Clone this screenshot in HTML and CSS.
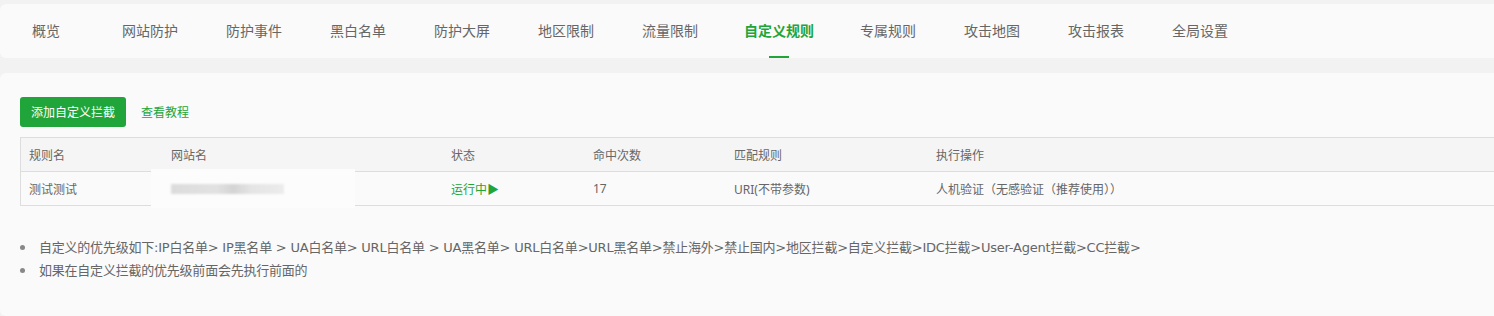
FILE: index.html
```html
<!DOCTYPE html>
<html>

<head>
    <meta charset="utf-8" />
    <meta name="viewport" content="width=device-width, initial-scale=1.0">
    <title>自定义规则</title>
    <link rel="stylesheet" href="styles.css">
</head>

<body>
    <div class="tab-card">
        <ul class="tab-nav">
            <li class="first">概览</li>
            <li>网站防护</li>
            <li>防护事件</li>
            <li>黑白名单</li>
            <li>防护大屏</li>
            <li>地区限制</li>
            <li>流量限制</li>
            <li class="on">自定义规则</li>
            <li>专属规则</li>
            <li>攻击地图</li>
            <li>攻击报表</li>
            <li>全局设置</li>
        </ul>
    </div>

    <div class="main-card">
        <div class="toolbar">
            <button class="btn-success">添加自定义拦截</button>
            <a class="link" href="#">查看教程</a>
        </div>

        <table class="rule-table">
            <thead>
                <tr>
                    <th class="c-name">规则名</th>
                    <th class="c-site">网站名</th>
                    <th class="c-status">状态</th>
                    <th class="c-hit">命中次数</th>
                    <th class="c-match">匹配规则</th>
                    <th>执行操作</th>
                </tr>
            </thead>
            <tbody>
                <tr>
                    <td>测试测试</td>
                    <td class="masked">
                        <span class="mask-box"><span class="blur-text"></span></span>
                    </td>
                    <td class="running">运行中▶</td>
                    <td>17</td>
                    <td>URI(不带参数)</td>
                    <td>人机验证（无感验证（推荐使用））</td>
                </tr>
            </tbody>
        </table>

        <ul class="help-list">
            <li>自定义的优先级如下:IP白名单&gt; IP黑名单 &gt; UA白名单&gt; URL白名单 &gt; UA黑名单&gt; URL白名单&gt;URL黑名单&gt;禁止海外&gt;禁止国内&gt;地区拦截&gt;自定义拦截&gt;IDC拦截&gt;User-Agent拦截&gt;CC拦截&gt;</li>
            <li>如果在自定义拦截的优先级前面会先执行前面的</li>
        </ul>
    </div>
</body>

</html>
```

FILE: styles.css
```css
/* Nền trang */
body {
    margin: 0;
    background-color: #f2f2f2;
    font-family: "Noto Sans", "Noto Sans CJK SC", sans-serif;
    color: #666;
    overflow: hidden;
    padding-top: 4px;
}

/* Thanh tab trên cùng */
.tab-card {
    background-color: #fafafa;
    border-radius: 6px;
    margin-right: -10px;
    height: 54px;
}

.tab-nav {
    list-style: none;
    margin: 0;
    padding: 0 0 0 32px;
    display: flex;
    gap: 48px;
    height: 54px;
}

.tab-nav li {
    position: relative;
    font-size: 14px;
    line-height: 54px;
    color: #666;
    white-space: nowrap;
}

.tab-nav li.first {
    min-width: 42px;
}

.tab-nav li.on {
    color: #20a53a;
    font-weight: bold;
    margin-left: -2px;
    margin-right: -2px;
}

.tab-nav li.on::after {
    content: "";
    position: absolute;
    left: 50%;
    bottom: 0;
    width: 20px;
    height: 2px;
    margin-left: -10px;
    background-color: #20a53a;
}

/* Khối nội dung */
.main-card {
    box-sizing: border-box;
    height: calc(100vh - 73px);
    background-color: #fafafa;
    border-radius: 6px;
    margin-top: 15px;
    margin-right: -10px;
    padding: 24px 0 0 20px;
    overflow: hidden;
}

.toolbar {
    display: flex;
    align-items: center;
    gap: 15px;
    height: 30px;
}

.btn-success {
    background-color: #20a53a;
    color: #fff;
    border: none;
    border-radius: 3px;
    height: 30px;
    padding: 0 11px;
    font-size: 12px;
    font-family: inherit;
    cursor: pointer;
}

.link {
    color: #20a53a;
    font-size: 12px;
    text-decoration: none;
}

/* Bảng quy tắc */
.rule-table {
    width: 1500px;
    margin-top: 10px;
    border-collapse: collapse;
    border-left: 1px solid #ddd;
    font-size: 12px;
}

.rule-table th,
.rule-table td {
    height: 33px;
    padding: 0 8px;
    text-align: left;
    font-weight: normal;
    color: #666;
    border-top: 1px solid #ddd;
    border-bottom: 1px solid #ddd;
    white-space: nowrap;
}

.rule-table th {
    background-color: #f5f5f5;
}

.c-name { width: 126px; }
.c-site { width: 264px; }
.c-status { width: 126px; }
.c-hit { width: 125px; }
.c-match { width: 186px; }

.rule-table td.masked {
    position: relative;
}

.mask-box {
    position: absolute;
    left: -12px;
    top: -3px;
    width: 204px;
    height: 39px;
    background-color: #fcfcfc;
}

.blur-text {
    position: absolute;
    left: 20px;
    top: 15px;
    width: 113px;
    height: 10px;
    background: linear-gradient(90deg, #dcdcdc 0, #e2e2e2 40%, #d4d4d4 55%, #e4e4e4 70%, #ececec 100%);
    filter: blur(1px);
}

.rule-table td.running {
    color: #20a53a;
}

/* Danh sách ghi chú */
.help-list {
    list-style: none;
    margin: 30px 0 0;
    padding: 0;
    font-family: "DejaVu Sans", "Noto Sans CJK SC", sans-serif;
    font-size: 13px;
    line-height: 23px;
    letter-spacing: -0.22px;
    color: #666;
}

.help-list li::before {
    content: "";
    display: inline-block;
    width: 5px;
    height: 5px;
    margin: 0 14px 2px 0;
    border-radius: 50%;
    background-color: #888;
    vertical-align: middle;
}
```
